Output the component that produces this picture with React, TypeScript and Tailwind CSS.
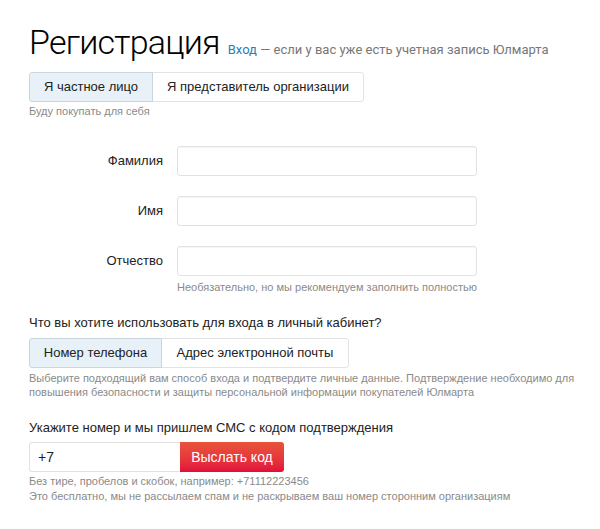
import { useState } from 'react';

const body = "font-['Liberation_Sans',Arial,sans-serif]";

function Tabs({ items, widths }: { items: string[]; widths: string[] }) {
  const [active, setActive] = useState(0);
  return (
    <div className="flex">
      {items.map((item, i) => (
        <button
          key={item}
          onClick={() => setActive(i)}
          className={`h-[30px] border text-[13px] text-[#222] ${widths[i]} ${
            i === 0 ? 'rounded-l-[3px]' : '-ml-px rounded-r-[3px]'
          } ${
            active === i
              ? 'z-10 border-[#c9d6df] bg-[#e7f1f7]'
              : 'border-[#e3e3e3] bg-white'
          }`}
        >
          {item}
        </button>
      ))}
    </div>
  );
}

function Field({ label, hint }: { label: string; hint?: string }) {
  return (
    <div className="flex">
      <label className="w-[134px] pt-[5px] text-right text-[13px] text-[#222]">{label}</label>
      <div className="ml-[14px]">
        <input className="block h-[30px] w-[300px] rounded-[3px] border border-[#e2e2e2] px-2 text-[13px] shadow-[inset_0_1px_1px_rgba(0,0,0,0.04)] outline-none" />
        {hint && <p className="mt-[3px] text-[11px] text-[#8a8a8a]">{hint}</p>}
      </div>
    </div>
  );
}

export default function App() {
  return (
    <div className={`min-h-[529px] bg-white pl-[29px] pt-[21px] ${body}`}>
      <div className="flex items-baseline">
        <h1 className="font-['Roboto',sans-serif] text-[34px] leading-[42px] font-light tracking-[-0.8px] text-black">
          Регистрация
        </h1>
        <p className="ml-[8px] font-['Roboto',sans-serif] text-[13px] text-[#777]">
          <a href="#" className="text-[#2b7db5]">Вход</a> — если у вас уже есть учетная запись Юлмарта
        </p>
      </div>

      <div className="mt-[9px]">
        <Tabs items={['Я частное лицо', 'Я представитель организации']} widths={['w-[124px]', 'w-[212px]']} />
        <p className="mt-[1px] text-[11px] text-[#8a8a8a]">Буду покупать для себя</p>
      </div>

      <div className="mt-[26px] flex flex-col gap-[20px]">
        <Field label="Фамилия" />
        <Field label="Имя" />
        <Field label="Отчество" hint="Необязательно, но мы рекомендуем заполнить полностью" />
      </div>

      <p className="mt-[18px] text-[13px] text-[#222]">Что вы хотите использовать для входа в личный кабинет?</p>
      <div className="mt-[5px]">
        <Tabs items={['Номер телефона', 'Адрес электронной почты']} widths={['w-[133px]', 'w-[188px]']} />
        <p className="mt-[3px] w-[560px] text-[11px] leading-[14px] text-[#8a8a8a]">
          Выберите подходящий вам способ входа и подтвердите личные данные. Подтверждение необходимо для
          повышения безопасности и защиты персональной информации покупателей Юлмарта
        </p>
      </div>

      <p className="mt-[19px] text-[13px] text-[#222]">Укажите номер и мы пришлем СМС с кодом подтверждения</p>
      <div className="mt-[5px] flex">
        <input
          defaultValue="+7"
          className="h-[30px] w-[151px] rounded-l-[3px] border border-r-0 border-[#e2e2e2] px-[8px] text-[14px] text-[#222] outline-none"
        />
        <button className="h-[30px] w-[104px] rounded-r-[3px] bg-gradient-to-b from-[#e9533a] to-[#e30a3d] text-[14px] text-white">
          Выслать код
        </button>
      </div>
      <p className="mt-[2px] text-[11px] leading-[15px] text-[#8a8a8a]">
        Без тире, пробелов и скобок, например: +71112223456
        <br />
        Это бесплатно, мы не рассылаем спам и не раскрываем ваш номер сторонним организациям
      </p>
    </div>
  );
}
